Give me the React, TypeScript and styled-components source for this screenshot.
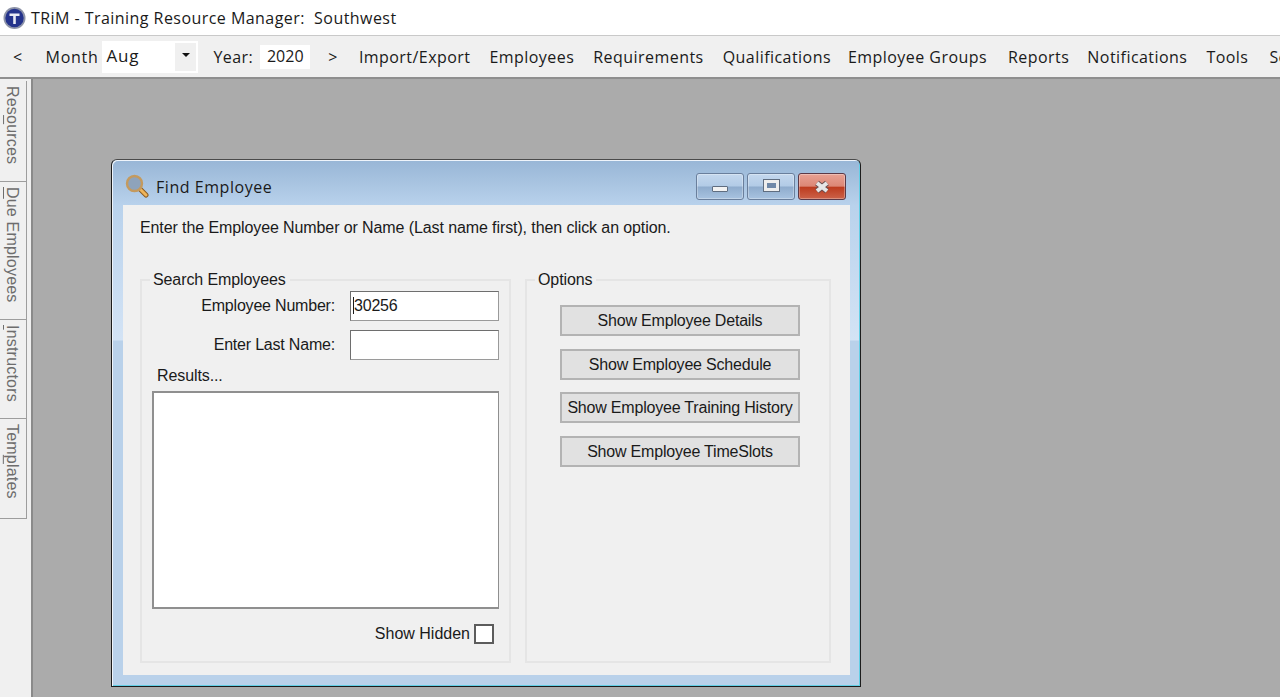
import React from "react";
import styled, { createGlobalStyle } from "styled-components";

const GlobalStyle = createGlobalStyle`
  html, body {
    margin: 0;
    padding: 0;
    height: 100%;
    overflow: hidden;
    background: #ffffff;
  }
  #root {
    height: 100%;
  }
`;

const Screen = styled.div`
  width: 1280px;
  height: 697px;
  display: flex;
  flex-direction: column;
  overflow: hidden;
  font-family: "Open Sans", "Liberation Sans", sans-serif;
  color: #1a1a1a;
`;

const TitleBar = styled.div`
  height: 35px;
  flex: none;
  display: flex;
  align-items: center;
  gap: 5px;
  padding-left: 3px;
  background: #ffffff;
  border-bottom: 1px solid #c9c9c9;
  font-size: 16px;
  letter-spacing: 0.45px;
  white-space: pre;
`;

const MenuBar = styled.div`
  height: 41px;
  flex: none;
  display: flex;
  align-items: center;
  background: #f0f0f0;
  border-bottom: 2px solid #8f8f8f;
  font-size: 16px;
  white-space: nowrap;
  overflow: hidden;
`;

const MenuText = styled.span<{ $left: number; $spacing?: number }>`
  margin-left: ${({ $left }) => $left}px;
  letter-spacing: ${({ $spacing }) => $spacing ?? 0.45}px;
  flex: none;
`;

const MonthCombo = styled.div`
  width: 96px;
  height: 32px;
  flex: none;
  margin-left: 4px;
  display: flex;
  background: #ffffff;
  font-size: 17px;
  letter-spacing: 0.8px;
  line-height: 29px;
`;

const MonthValue = styled.span`
  flex: 1;
  padding-left: 4px;
`;

const ComboArrow = styled.span`
  width: 21px;
  margin: 2px;
  background: #f0f0f0;
  display: flex;
  align-items: center;
  justify-content: center;
  &::after {
    content: "";
    margin-top: -3px;
    border-top: 4px solid #111;
    border-left: 4px solid transparent;
    border-right: 4px solid transparent;
  }
`;

const YearBox = styled.div`
  width: 50px;
  height: 24px;
  flex: none;
  margin-left: 7px;
  background: #ffffff;
  text-align: center;
  line-height: 23px;
  font-size: 16px;
`;

const Workspace = styled.div`
  flex: 1;
  display: flex;
  min-height: 0;
  background: #f0f0f0;
`;

const TabRail = styled.div`
  width: 31px;
  flex: none;
  padding-top: 2px;
  display: flex;
  flex-direction: column;
  background: #f0f0f0;
`;

const SideTab = styled.div<{ $height: number }>`
  width: 27px;
  height: ${({ $height }) => $height}px;
  box-sizing: border-box;
  border: 1px solid #9d9d9d;
  border-left: none;
  border-top: none;
  writing-mode: vertical-rl;
  font-family: "Liberation Sans", Arial, sans-serif;
  font-size: 16px;
  letter-spacing: 0.2px;
  line-height: 27px;
  padding-top: 5px;
  color: #6d6d6d;
  white-space: nowrap;

  u {
    text-underline-position: under left;
  }
`;

const MdiArea = styled.div`
  flex: 1;
  position: relative;
  background: #ababab;
  border-left: 2px solid #8a8a8a;
`;

const Dialog = styled.div`
  position: absolute;
  left: 78px;
  top: 80px;
  width: 750px;
  height: 528px;
  box-sizing: border-box;
  display: flex;
  flex-direction: column;
  padding: 1px 10px 11px 11px;
  border-radius: 6px 6px 0 0;
  border: 1px solid #1c1c1c;
  border-top-color: #4a4a4a;
  box-shadow: inset 1px 1px 0 #eef4fb, inset -1px -1px 0 #62cfe6;
  background: linear-gradient(
    to bottom,
    #98b6d6 0,
    #b9d2ec 46px,
    #d3e3f5 180px,
    #b9d1ea 181px
  );
  font-family: "Liberation Sans", Arial, sans-serif;
  font-size: 16px;
  letter-spacing: -0.1px;
  color: #1a1a1a;
`;

const DialogHeader = styled.div`
  height: 44px;
  box-sizing: border-box;
  padding-top: 6px;
  flex: none;
  display: flex;
  align-items: center;
  margin-left: 2px;
`;

const DialogTitle = styled.span`
  margin: 2px 0 0 7px;
  flex: 1;
  font-family: "Open Sans", sans-serif;
  font-size: 16px;
  letter-spacing: 0.55px;
`;

const CaptionButtons = styled.div`
  display: flex;
  gap: 3px;
  margin: 1px 4px 0 0;
`;

const CaptionButton = styled.div<{ $close?: boolean }>`
  width: 48px;
  height: 27px;
  box-sizing: border-box;
  display: flex;
  align-items: center;
  justify-content: center;
  border-radius: 3px;
  border: 1px solid ${({ $close }) => ($close ? "#5b3947" : "#6a7f9c")};
  box-shadow: inset 0 0 0 1px rgba(255, 255, 255, 0.3);
  background: ${({ $close }) =>
    $close
      ? "linear-gradient(to bottom, #e8a194 0, #dc8776 48%, #bd3c20 54%, #cc6249 100%)"
      : "linear-gradient(to bottom, #c4d8ee 0, #b2cbe6 48%, #8faccd 52%, #a8c3e0 100%)"};
`;

const MinGlyph = styled.span`
  width: 14px;
  height: 4px;
  margin-top: 5px;
  background: #f2f2f2;
  border: 1px solid #5f6d80;
  border-radius: 1px;
`;

const MaxGlyph = styled.span`
  width: 9px;
  height: 5px;
  margin-top: -2px;
  background: #6f88a8;
  border: 3px solid #eeeeee;
  outline: 1px solid #5f6d80;
`;

const ClientArea = styled.div`
  flex: 1;
  min-height: 0;
  display: flex;
  flex-direction: column;
  padding: 13px 19px 12px 17px;
  background: #f0f0f0;
`;

const Instruction = styled.div`
  height: 20px;
  line-height: 20px;
  white-space: nowrap;
`;

const Groups = styled.div`
  flex: 1;
  margin-top: 32px;
  display: flex;
  gap: 14px;
  min-height: 0;
`;

const Group = styled.fieldset<{ $width: number }>`
  width: ${({ $width }) => $width}px;
  box-sizing: border-box;
  margin: 0;
  padding: 0;
  min-width: 0;
  display: flex;
  flex-direction: column;
  border: 2px solid #e5e5e5;
`;

const Legend = styled.legend`
  margin-left: 8px;
  padding: 0 4px 0 3px;
  line-height: 20px;
  height: 20px;
`;

const FieldRow = styled.div`
  height: 29px;
  display: flex;
  align-items: center;
  justify-content: flex-end;
  gap: 15px;
  padding-right: 10px;
  margin-bottom: 10px;
  letter-spacing: -0.2px;
`;

const SearchBody = styled.div`
  flex: 1;
  display: flex;
  flex-direction: column;
  padding-top: 1px;
`;

const TextBox = styled.div`
  width: 149px;
  height: 30px;
  box-sizing: border-box;
  background: #ffffff;
  border: 1px solid #6e6e6e;
  border-right-color: #9a9a9a;
  border-bottom-color: #9a9a9a;
  padding-left: 2px;
  line-height: 27px;
  font-size: 16px;
`;

const Caret = styled.span`
  border-left: 1px solid #1a1a1a;
`;

const ResultsLabel = styled.div`
  margin: -2px 0 0 15px;
  height: 18px;
  line-height: 18px;
`;

const ResultsList = styled.div`
  width: 347px;
  height: 218px;
  margin: 6px 0 0 10px;
  box-sizing: border-box;
  background: #ffffff;
  border: 2px solid #8f8f8f;
  border-right-width: 1px;
`;

const HiddenRow = styled.div`
  margin-top: 15px;
  display: flex;
  align-items: center;
  justify-content: flex-end;
  gap: 4px;
  padding-right: 15px;
  letter-spacing: 0;
`;

const CheckBox = styled.span`
  width: 20px;
  height: 20px;
  box-sizing: border-box;
  background: #ffffff;
  border: 2px solid #5c5c5c;
`;

const OptionsBody = styled.div`
  flex: 1;
  display: flex;
  flex-direction: column;
  align-items: center;
  gap: 12.6px;
  padding: 15px 0 0 4px;
`;

const OptionButton = styled.div`
  width: 240px;
  height: 31px;
  box-sizing: border-box;
  display: flex;
  align-items: center;
  justify-content: center;
  padding-top: 1px;
  background: #e1e1e1;
  border: 2px solid #b3b3b3;
  white-space: nowrap;
  letter-spacing: -0.2px;
`;

const AppLogo = () => (
  <svg width="23" height="24" viewBox="0 0 23 24">
    <circle cx="11.5" cy="12" r="11" fill="#8d93a8" />
    <circle cx="11.5" cy="12" r="9.2" fill="#24338c" />
    <path d="M6.5 7.5h10v2.4h-3.7V18h-2.6V9.9H6.5z" fill="#e8eaf4" />
  </svg>
);

const SearchIcon = () => (
  <svg width="24" height="24" viewBox="0 0 24 24">
    <path d="M14 14l7 7" stroke="#8a5a20" strokeWidth="5" strokeLinecap="round" />
    <path d="M14.5 14.5l6.5 6.5" stroke="#eeb45a" strokeWidth="3" strokeLinecap="round" />
    <circle cx="9.5" cy="9.5" r="7.5" fill="#8ea3bb" stroke="#c49a5e" strokeWidth="2.4" />
  </svg>
);

const SIDE_TABS = [
  { height: 101, label: <>Res<u>o</u>urces</> },
  { height: 138, label: <><u>D</u>ue Employees</> },
  { height: 99, label: <><u>I</u>nstructors</> },
  { height: 100, label: <>Tem<u>p</u>lates</> },
];

const OPTIONS = [
  "Show Employee Details",
  "Show Employee Schedule",
  "Show Employee Training History",
  "Show Employee TimeSlots",
];

const App: React.FC = () => {
  return (
    <Screen>
      <GlobalStyle />
      <TitleBar>
        <AppLogo />
        <span>TRiM - Training Resource Manager:  Southwest</span>
      </TitleBar>
      <MenuBar>
        <MenuText $left={13}>&lt;</MenuText>
        <MenuText $left={23} $spacing={0.7}>Month</MenuText>
        <MonthCombo>
          <MonthValue>Aug</MonthValue>
          <ComboArrow />
        </MonthCombo>
        <MenuText $left={15}>Year:</MenuText>
        <YearBox>2020</YearBox>
        <MenuText $left={18}>&gt;</MenuText>
        <MenuText $left={21}>Import/Export</MenuText>
        <MenuText $left={19}>Employees</MenuText>
        <MenuText $left={19}>Requirements</MenuText>
        <MenuText $left={19}>Qualifications</MenuText>
        <MenuText $left={17}>Employee Groups</MenuText>
        <MenuText $left={21}>Reports</MenuText>
        <MenuText $left={18}>Notifications</MenuText>
        <MenuText $left={19}>Tools</MenuText>
        <MenuText $left={21}>Search</MenuText>
      </MenuBar>
      <Workspace>
        <TabRail>
          {SIDE_TABS.map((tab, idx) => (
            <SideTab key={`SideTab-${idx}`} $height={tab.height}>
              {tab.label}
            </SideTab>
          ))}
        </TabRail>
        <MdiArea>
          <Dialog>
            <DialogHeader>
              <SearchIcon />
              <DialogTitle>Find Employee</DialogTitle>
              <CaptionButtons>
                <CaptionButton>
                  <MinGlyph />
                </CaptionButton>
                <CaptionButton>
                  <MaxGlyph />
                </CaptionButton>
                <CaptionButton $close>
                  <svg width="20" height="14" viewBox="0 0 20 14">
                    <path
                      d="M5 3l10 8M15 3L5 11"
                      stroke="#6a4f4f"
                      strokeWidth="6"
                    />
                    <path
                      d="M5 3l10 8M15 3L5 11"
                      stroke="#e6e6e6"
                      strokeWidth="4"
                    />
                  </svg>
                </CaptionButton>
              </CaptionButtons>
            </DialogHeader>
            <ClientArea>
              <Instruction>
                Enter the Employee Number or Name (Last name first), then click
                an option.
              </Instruction>
              <Groups>
                <Group $width={371}>
                  <Legend>Search Employees</Legend>
                  <SearchBody>
                    <FieldRow>
                      <span>Employee Number:</span>
                      <TextBox>
                        <Caret />
                        30256
                      </TextBox>
                    </FieldRow>
                    <FieldRow>
                      <span>Enter Last Name:</span>
                      <TextBox />
                    </FieldRow>
                    <ResultsLabel>Results...</ResultsLabel>
                    <ResultsList />
                    <HiddenRow>
                      <span>Show Hidden</span>
                      <CheckBox />
                    </HiddenRow>
                  </SearchBody>
                </Group>
                <Group $width={306}>
                  <Legend>Options</Legend>
                  <OptionsBody>
                    {OPTIONS.map((option) => (
                      <OptionButton key={option}>{option}</OptionButton>
                    ))}
                  </OptionsBody>
                </Group>
              </Groups>
            </ClientArea>
          </Dialog>
        </MdiArea>
      </Workspace>
    </Screen>
  );
};

export default App;
